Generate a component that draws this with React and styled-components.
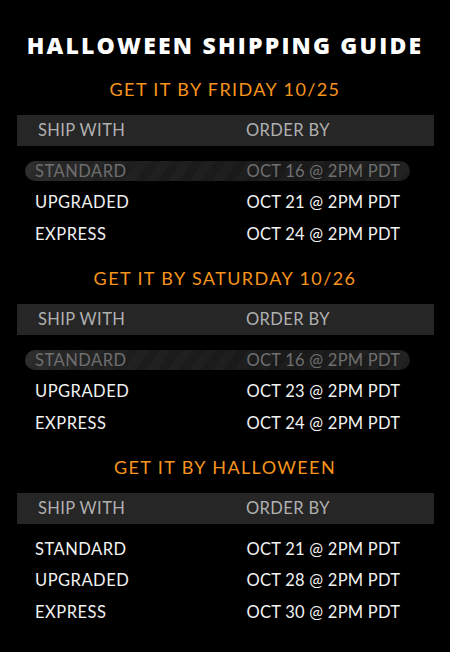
import React from "react";
import styled, { createGlobalStyle } from "styled-components";

const Global = createGlobalStyle`
  html, body { margin: 0; padding: 0; background: #000; }
  body { font-family: "Lato", "Open Sans", sans-serif; }
`;

const Page = styled.div`
  width: 450px;
  height: 652px;
  background: #000;
  box-sizing: border-box;
  padding-top: 32px;
  overflow: hidden;
`;

const Title = styled.h1`
  margin: 0;
  font-family: "Open Sans", sans-serif;
  font-weight: 800;
  font-size: 23px;
  line-height: 26px;
  letter-spacing: 2.2px;
  color: #fff;
  text-align: center;
`;

const Section = styled.section`
  display: flex;
  flex-direction: column;
  padding-bottom: 16.25px;
  &:first-of-type { margin-top: 18.5px; }
`;

const Sub = styled.h2`
  margin: 0 0 14.5px;
  font-weight: 400;
  font-size: 18px;
  line-height: 24px;
  letter-spacing: 1.4px;
  color: #f7941d;
  text-align: center;
`;

const Header = styled.div`
  display: grid;
  grid-template-columns: 208px 1fr;
  align-items: center;
  margin: 0 16px 9.25px 17px;
  height: 30.5px;
  padding-left: 21px;
  background: #262626;
  color: #b0b0b0;
  font-size: 16.5px;
  letter-spacing: 0.4px;
`;

const Row = styled.div`
  display: grid;
  grid-template-columns: 211.5px 1fr;
  align-items: center;
  height: 31.5px;
  padding-left: 35px;
  color: ${(p) => (p.$muted ? "#6f6f6f" : "#f2f2f2")};
  font-size: 16.5px;
  letter-spacing: 0.5px;
  position: relative;
  z-index: 0;
  &::before {
    content: "";
    display: ${(p) => (p.$muted ? "block" : "none")};
    position: absolute;
    z-index: -1;
    left: 25px;
    width: 385px;
    top: 5.75px;
    height: 20px;
    border-radius: 10px;
    background:
      repeating-linear-gradient(
        -55deg,
        rgba(255,255,255,0) 0px,
        rgba(255,255,255,0) 9px,
        rgba(255,255,255,0.018) 9px,
        rgba(255,255,255,0.018) 18px
      ),
      linear-gradient(90deg, #2a2a2a, #1c1c1c 30%, #191919 70%, #1e1e1e);
  }
`;

const DateCell = styled.span`
  letter-spacing: 0.25px;
`;

const sections = [
  {
    title: "GET IT BY FRIDAY 10/25",
    rows: [
      ["STANDARD", "OCT 16 @ 2PM PDT", true],
      ["UPGRADED", "OCT 21 @ 2PM PDT"],
      ["EXPRESS", "OCT 24 @ 2PM PDT"],
    ],
  },
  {
    title: "GET IT BY SATURDAY 10/26",
    rows: [
      ["STANDARD", "OCT 16 @ 2PM PDT", true],
      ["UPGRADED", "OCT 23 @ 2PM PDT"],
      ["EXPRESS", "OCT 24 @ 2PM PDT"],
    ],
  },
  {
    title: "GET IT BY HALLOWEEN",
    rows: [
      ["STANDARD", "OCT 21 @ 2PM PDT"],
      ["UPGRADED", "OCT 28 @ 2PM PDT"],
      ["EXPRESS", "OCT 30 @ 2PM PDT"],
    ],
  },
];

export default function App() {
  return (
    <Page>
      <Global />
      <Title>HALLOWEEN SHIPPING GUIDE</Title>
      {sections.map((s) => (
        <Section key={s.title}>
          <Sub>{s.title}</Sub>
          <Header>
            <span>SHIP WITH</span>
            <span>ORDER BY</span>
          </Header>
          {s.rows.map(([a, b, m]) => (
            <Row key={a} $muted={m}>
              <span>{a}</span>
              <DateCell>{b}</DateCell>
            </Row>
          ))}
        </Section>
      ))}
    </Page>
  );
}
